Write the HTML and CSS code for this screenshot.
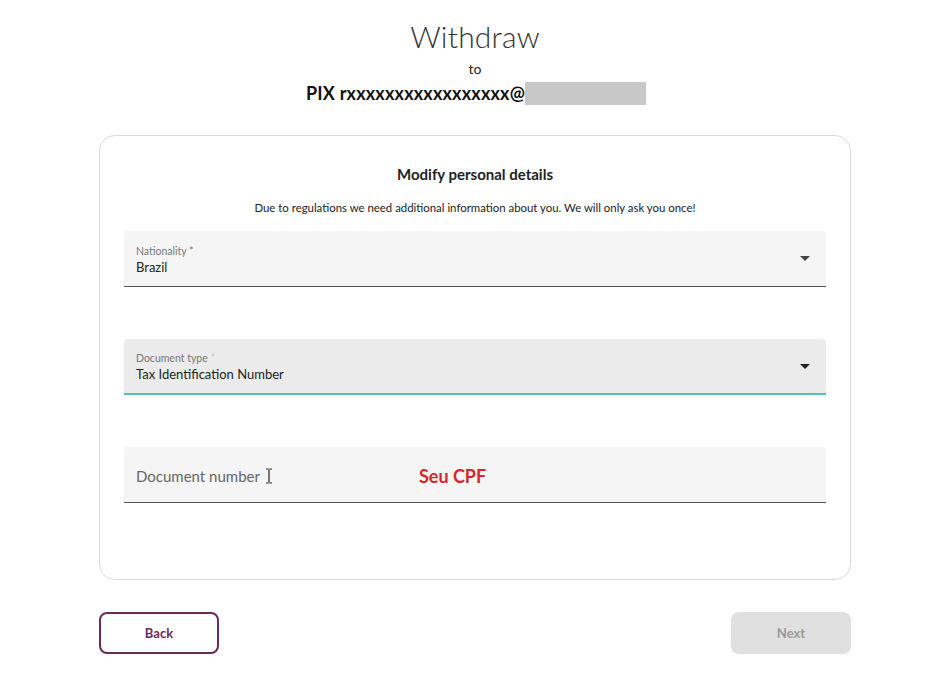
FILE: index.html
```html
<!DOCTYPE html>
<html lang="en">
<head>
<meta charset="utf-8">
<title>Withdraw</title>
<link rel="stylesheet" href="styles.css">
</head>
<body>
<div class="page">
  <header class="head">
    <h1 class="title">Withdraw</h1>
    <div class="to">to</div>
    <div class="dest">PIX rxxxxxxxxxxxxxxxxx@<span class="redact"></span></div>
  </header>

  <section class="card">
    <h2 class="card-title">Modify personal details</h2>
    <p class="card-sub">Due to regulations we need additional information about you. We will only ask you once!</p>

    <div class="fields">
      <div class="field">
        <div class="field-text">
          <span class="label">Nationality *</span>
          <span class="value">Brazil</span>
        </div>
        <span class="arrow"></span>
      </div>

      <div class="field field-focus">
        <div class="field-text">
          <span class="label">Document type <span class="ast">*</span></span>
          <span class="value">Tax Identification Number</span>
        </div>
        <span class="arrow"></span>
      </div>

      <div class="field field-input">
        <span class="placeholder">Document number</span>
        <svg class="ibeam" width="8" height="16" viewBox="0 0 8 16"><path d="M1 1h2.5M4.5 1H7M4 1.5v13M1 15h2.5M4.5 15H7" fill="none" stroke="#222" stroke-width="1.2"/></svg>
        <span class="note">Seu CPF</span>
      </div>
    </div>
  </section>

  <div class="actions">
    <button class="btn btn-back">Back</button>
    <button class="btn btn-next">Next</button>
  </div>
</div>
</body>
</html>
```

FILE: styles.css
```css
* { box-sizing: border-box; }
html, body { margin: 0; padding: 0; background: #fff; }
body {
  font-family: "Lato", "Noto Sans", sans-serif;
  color: #222;
  padding-left: 11px;
}
.page {
  width: 752px;
  margin: 0 auto;
}
.head {
  display: flex;
  flex-direction: column;
  align-items: center;
  padding-top: 18px;
}
.title {
  margin: 0;
  font-weight: 300;
  font-size: 30px;
  line-height: 36px;
  color: #333;
  letter-spacing: 0.2px;
}
.to {
  margin-top: 6px;
  font-size: 14px;
  line-height: 18px;
  color: #222;
}
.dest {
  margin-top: 3px;
  font-size: 18px;
  font-weight: 700;
  line-height: 24px;
  display: flex;
  align-items: center;
  color: #111;
  padding-left: 2px;
  letter-spacing: 0.2px;
}
.redact {
  display: inline-block;
  width: 121px;
  height: 23px;
  background: #c8c8c8;
}
.card {
  margin-top: 30px;
  border: 1px solid #dcdcdc;
  border-radius: 16px;
  padding: 28px 24px 76px;
}
.card-title {
  margin: 0;
  text-align: center;
  font-size: 15px;
  font-weight: 700;
  line-height: 20px;
  color: #222;
}
.card-sub {
  margin: 16px 0 0;
  text-align: center;
  font-size: 11.4px;
  line-height: 16px;
  color: #222;
}
.fields {
  margin-top: 15px;
  display: flex;
  flex-direction: column;
  gap: 52px;
}
.field {
  height: 56px;
  background: #f5f5f5;
  border-radius: 4px 4px 0 0;
  border-bottom: 1px solid #555;
  display: flex;
  align-items: center;
  padding: 0 12px;
}
.field-focus {
  background: #ebebeb;
  border-bottom: 2px solid #4fbfc4;
}
.field-text {
  flex: 1;
  display: flex;
  flex-direction: column;
  padding-top: 2px;
}
.label {
  font-size: 10.5px;
  line-height: 14px;
  color: #777;
}
.ast { color: #9fd6d9; }
.value {
  font-size: 13px;
  line-height: 18px;
  color: #222;
}
.arrow {
  width: 0;
  height: 0;
  border-left: 5px solid transparent;
  border-right: 5px solid transparent;
  border-top: 5px solid #444;
  margin-right: 4px;
}
.field-focus .arrow { border-top-color: #222; }
.field-input { padding-top: 2px; }
.placeholder {
  font-size: 15px;
  color: #666;
}
.ibeam { margin-left: 5px; }
.note {
  margin-left: 146px;
  font-size: 18px;
  font-weight: 700;
  color: #d7262e;
}
.actions {
  margin-top: 32px;
  display: flex;
  justify-content: space-between;
}
.btn {
  width: 120px;
  height: 42px;
  border-radius: 8px;
  font-family: inherit;
  font-size: 13px;
  font-weight: 700;
}
.btn-back {
  background: #fff;
  border: 2px solid #6a2a5c;
  color: #6a2a5c;
}
.btn-next {
  background: #e0e0e0;
  border: none;
  color: #999;
}
```
